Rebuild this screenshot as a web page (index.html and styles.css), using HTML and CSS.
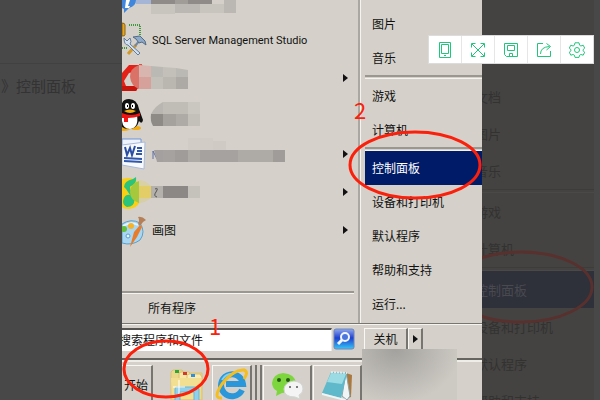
FILE: index.html
```html
<!doctype html>
<html lang="zh-CN">
<head>
    <meta charset="UTF-8">
    <meta name="viewport" content="width=device-width, initial-scale=1.0">
    <title>控制面板</title>
    <link rel="stylesheet" href="styles.css">
</head>
<body>

<div class="page">

    <div class="back-left">
        <div class="back-head"></div>
        <p>》控制面板</p>
    </div>

    <div class="photo">
        <div class="menu">
            <div class="programs">
                <ul>
                    <li class="first">
                        <svg class="pic" width="170" height="21" viewBox="0 0 170 21">
                            <path d="M0 0h14q0 6-7 8l-5 5v-4l-2-1z" fill="#3f86dc"/>
                            <path d="M4 0h4l-2 6h2l-1 2H3z" fill="#fff"/>
                            <path fill="#a5b5d5" d="M14 0h15v4H14z"/>
                            <path fill="#8e8b88" d="M29 0h24v4H29zM66 0h24v4H66z"/>
                            <path fill="#a09d99" d="M53 0h13v4H53z"/>
                            <path fill="#c8c5bf" d="M29 4h24v10H29zM78 4h24v9H78z"/>
                            <path fill="#bbb8b3" d="M53 4h25v9H53zM102 0h12v13h-12z"/>
                        </svg>
                    </li>
                    <li>
                        <svg class="pic" width="30" height="38" viewBox="0 0 30 38">
                            <path d="M0 2q3 0 3 2v10q0 1-3 1z" fill="#e6a51c" stroke="#8a6414"/>
                            <path d="M7 4h11v11M0 27h5" fill="none" stroke="#3c9a3c" stroke-width="2" stroke-dasharray="1 1"/>
                            <path d="M6 33l8-9" stroke="#d39a2a" stroke-width="3"/>
                            <path d="M13 25l5-6" stroke="#7187a3" stroke-width="2"/>
                            <path d="M11 16l7-1 5 5 1 4-4-3-3 1-3-4z" fill="#8fa9c8" stroke="#536b87"/>
                            <path d="M2 17l3 3 3-3q2 4 0 6l10 9-2 2L6 24q-4 0-4-7z" fill="#d3e0ee" stroke="#627d9c"/>
                        </svg>
                        <span class="latin">SQL Server Management Studio</span>
                    </li>
                    <li class="more">
                        <svg class="pic" width="170" height="38" viewBox="0 0 170 38">
                            <path d="M0 14L7 6h14l-9 7-5 1-5 8 2 5h13l-3 5H0z" fill="#e32119"/>
                            <path d="M0 27h17l-3 5H0z" fill="#c5150c"/>
                            <path d="M17 5h3v4h-3z" fill="#dc5047"/>
                            <path d="M17 6q-9 3-9 12 1 9 9 12z" fill="#db7268"/>
                            <path d="M17 6l12 1v11H17z" fill="#d8b5ae"/>
                            <path d="M17 18h12v12H17z" fill="#d5a19a"/>
                            <path d="M29 7l12 1v10H29zM54 9l12 2v7H54z" fill="#bbb9b3"/>
                            <path d="M41 8l13 1v9H41zM29 18h12v12H29z" fill="#c3c0ba"/>
                            <path d="M41 18h13v12H41z" fill="#bab7b1"/>
                            <path d="M54 18h12v12H54z" fill="#adaaa5"/>
                        </svg>
                    </li>
                    <li>
                        <svg class="pic" width="170" height="38" viewBox="0 0 170 38">
                            <ellipse cx="2" cy="31" rx="7" ry="3" fill="#f2ac12"/>
                            <ellipse cx="14" cy="31" rx="5" ry="2" fill="#f2ac12"/>
                            <path d="M-1 12q0-10 8-10t10 10l4 11q-1 5-4 1-2 8-10 8t-9-6z" fill="#111"/>
                            <path d="M0 18h15q2 13-7 14-7 0-8-8z" fill="#fff"/>
                            <ellipse cx="5" cy="9" rx="2" ry="3" fill="#fff"/>
                            <ellipse cx="11" cy="9" rx="2" ry="3" fill="#fff"/>
                            <path d="M5 8h1v2H5zM10 8h1v2h-1z"/>
                            <path d="M2 14q6-3 12 0-6 4-12 0z" fill="#f2ac12"/>
                            <path d="M0 16q9 4 18 0v3q-6 2-12 2v4H2v-4H0z" fill="#f01515"/>
                            <path d="M41 5v12H29q4-8 12-12z" fill="#b9b6b1"/>
                            <path d="M41 5h25v12H41z" fill="#c0bdb7"/>
                            <path d="M66 5h12v12H66z" fill="#cac6c0"/>
                            <path d="M29 17h12v12H31q-3-5-2-12z" fill="#8e8b87"/>
                            <path d="M41 17h13v12H41z" fill="#a5a29d"/>
                            <path d="M54 17h12v12H54z" fill="#aeaba6"/>
                            <path d="M66 17h12v12H66z" fill="#c3c0ba"/>
                        </svg>
                    </li>
                    <li class="more">
                        <svg class="pic" width="170" height="38" viewBox="0 0 170 38">
                            <path d="M0 4h19v10H0z" fill="#eef3fc" stroke="#6d93d6"/>
                            <path d="M0 10l23-3-1 27-22-4z" fill="#f7f9fd" stroke="#a9bbdb"/>
                            <path d="M3 12l2 8 3-7 2 7 3-9" fill="none" stroke="#2a4ea3" stroke-width="2"/>
                            <path d="M15 13h5M15 16h5M14 19h6M2 23l18 1M2 26l18 1" stroke="#3157ab" stroke-width="2"/>
                            <path d="M31 24v-8l4 8" fill="none" stroke="#5f6fa5"/>
                            <path d="M66 3h25v12H66z" fill="#d1cdc6"/>
                            <path d="M91 6h13v9H91z" fill="#cfcbc4"/>
                            <path d="M32 15h9v12h-6z" fill="#a3a09f"/>
                            <path d="M41 15h12v12H41zM78 15h38v12H78z" fill="#a5a2a0"/>
                            <path d="M53 15h13v12H53zM151 15h12v12h-12z" fill="#9f9c99"/>
                            <path d="M66 15h12v12H66zM116 15h35v12h-35z" fill="#aeaba6"/>
                        </svg>
                    </li>
                    <li class="more">
                        <svg class="pic" width="170" height="38" viewBox="0 0 170 38">
                            <path d="M0 6q17-5 20 15-2 15-14 15-4 0-6-2z" fill="#fbd014"/>
                            <path d="M2 14q0-6 9-8l3-2q1 7-5 9-3 1 3 11 2 10-7 10-6-3-3-9 2-4 6-3l-4-6z" fill="#2cc47a"/>
                            <path d="M17 8q-9 3-9 11t9 11z" fill="#a5c83c"/>
                            <path d="M17 7q6 0 12 6H17z" fill="#d9d0a3"/>
                            <path d="M17 13h12v12H17z" fill="#e3cd66"/>
                            <path d="M17 25h12q-6 5-12 5z" fill="#d7cea5"/>
                            <path d="M29 13h12v12H29z" fill="#b4b0ab"/>
                            <path d="M33 16q4-2 1 3-3 4 1 5" fill="none" stroke="#555"/>
                            <path d="M41 13h25v12H41z" fill="#8b8885"/>
                            <path d="M66 13h12v12H66z" fill="#c5c2bc"/>
                        </svg>
                    </li>
                    <li class="more">
                        <svg class="pic" width="30" height="38" viewBox="0 0 30 38">
                            <path d="M0 13q9-6 18-1 6 9 0 17-8 6-18 3z" fill="#a9d7f1" stroke="#5b9fc9"/>
                            <path d="M1 15q8-5 15-1" fill="none" stroke="#e3f4fd" stroke-width="2"/>
                            <circle cx="2" cy="18" r="3" fill="#65bf3b"/>
                            <circle cx="9" cy="15" r="3" fill="#f5b32a"/>
                            <circle cx="6" cy="25" r="2" fill="#eaf6fd" stroke="#5b9fc9"/>
                            <path d="M8 36l4-15 6-7 2 2-5 10z" fill="#e77d2b"/>
                            <path d="M16 6q4-1 8 3l-3 2-3 4-2-2q2-4 0-7z" fill="#b57f57"/>
                        </svg>
                        <span>画图</span>
                    </li>
                </ul>
                <div class="all">所有程序</div>
            </div>
            <ul class="places">
                <li>图片</li>
                <li>音乐</li>
                <li class="line"></li>
                <li>游戏</li>
                <li>计算机</li>
                <li class="line"></li>
                <li class="on">控制面板</li>
                <li>设备和打印机</li>
                <li>默认程序</li>
                <li>帮助和支持</li>
                <li>运行...</li>
            </ul>
        </div>

        <div class="search">
            <input type="text" value="搜索程序和文件" aria-label="搜索程序和文件">
            <button class="find" aria-label="搜索">
                <svg width="22" height="22" viewBox="0 0 22 22">
                    <defs>
                        <linearGradient id="blue" x2="0" y2="1">
                            <stop offset="0" stop-color="#8fa8ee"/>
                            <stop offset=".45" stop-color="#1e3fd0"/>
                            <stop offset="1" stop-color="#35c8f5"/>
                        </linearGradient>
                    </defs>
                    <rect x="1" y="1" width="20" height="20" rx="2" fill="url(#blue)" stroke="#6c86b8"/>
                    <circle cx="12" cy="9" r="4" fill="#4b77dd" stroke="#f3f6ff" stroke-width="2"/>
                    <path d="M9 12l-4 4" stroke="#f3f6ff" stroke-width="3"/>
                </svg>
            </button>
            <button class="btn off">关机</button>
            <button class="btn arrow" aria-label="更多"></button>
        </div>

        <div class="taskbar">
            <button class="btn start">开始</button>
            <button class="task plain" aria-label="资源管理器">
                <svg width="36" height="36" viewBox="0 0 36 36">
                    <path d="M2 7l2-2h9l2 3h18v27H2z" fill="#ecd88a" stroke="#d9c273"/>
                    <path d="M6 5h4v3H6z" fill="#2da836"/>
                    <path d="M10 8l2-1h8l2 3v8H10z" fill="#f6e7a6" stroke="#d9c273"/>
                    <path d="M14 7h4v3h-4z" fill="#d23b2c"/>
                    <path d="M18 10l2-1h11l2 3v8H18z" fill="#f8ecb4" stroke="#d9c273"/>
                    <path d="M22 9h4v3h-4z" fill="#2d8fdd"/>
                    <path d="M2 13h30l-1 21H3z" fill="#f3df92"/>
                    <path d="M6 36V24q0-2 2-2h19q3 0 3 2v12h-5v-9H11v9z" fill="#8fd0ec" stroke="#6bb5d6"/>
                    <path d="M10 15v14M4 22h12" stroke="#fff"/>
                </svg>
            </button>
            <button class="btn task" aria-label="浏览器">
                <svg width="36" height="36" viewBox="0 0 36 36">
                    <path d="M28 23a11 11 0 1 1 1-6H12" fill="none" stroke="#2a97da" stroke-width="6"/>
                    <path d="M8 13q4-7 12-6" fill="none" stroke="#7fd0f5" stroke-width="2"/>
                    <path d="M8 31Q-2 32 8 17 20 2 30 3q5 2 0 9" fill="none" stroke="#f5bd1d" stroke-width="3"/>
                </svg>
            </button>
            <div class="grip"></div>
            <button class="btn task wide" aria-label="微信">
                <svg width="36" height="34" viewBox="0 0 36 34">
                    <path d="M14 5q12 1 13 10-1 10-14 10l-6 3 1-5q-5-3-5-8Q4 6 14 5z" fill="#7ed63f"/>
                    <circle cx="10" cy="12" r="2" fill="#255b16"/>
                    <circle cx="19" cy="12" r="2" fill="#255b16"/>
                    <path d="M25 13q9 1 9 8 0 4-4 6l1 4-5-2q-11 0-11-8 1-7 10-8z" fill="#f3f4f3" stroke="#d3d6d3"/>
                    <circle cx="21" cy="19" r="1" fill="#555"/>
                    <circle cx="28" cy="19" r="1" fill="#555"/>
                </svg>
            </button>
            <button class="btn task wide" aria-label="记事本">
                <svg width="36" height="34" viewBox="0 0 36 34">
                    <path d="M27 5l6 2-1 22-6 2z" fill="#a9793f"/>
                    <path d="M27 4l4 24-3 4-5-4z" fill="#f2f5f6" stroke="#8aa3a9"/>
                    <path d="M12 4l16 1-6 25-19-5z" fill="#5fb9ca"/>
                    <path d="M12 5l15 1-4 10-15-2z" fill="#9bdbe4"/>
                    <path d="M3 25l19 5 5 1-1 2L3 27z" fill="#eef5f6"/>
                    <path d="M12 4l16 1" stroke="#e5e8e8" stroke-width="2" stroke-dasharray="2 1"/>
                </svg>
            </button>
        </div>

        <div class="smudge"></div>

        <svg class="marks" width="360" height="400" viewBox="0 0 360 400">
            <g fill="none" stroke="#fb200c" stroke-width="3">
                <ellipse cx="44" cy="369" rx="42" ry="28"/>
                <ellipse cx="293" cy="165" rx="65" ry="33"/>
            </g>
            <text x="87" y="335">1</text>
            <text x="232" y="119">2</text>
        </svg>
    </div>

    <div class="back-right">
        <ul class="ghost">
            <li>文档</li>
            <li>图片</li>
            <li>音乐</li>
            <li class="line"></li>
            <li>游戏</li>
            <li>计算机</li>
            <li class="line"></li>
            <li class="on">控制面板</li>
            <li>设备和打印机</li>
            <li>默认程序</li>
            <li>帮助和支持</li>
        </ul>
        <svg class="marks" width="118" height="400" viewBox="0 0 118 400">
            <ellipse cx="39" cy="287" rx="71" ry="35" fill="none" stroke="#58312e" stroke-width="3"/>
        </svg>
    </div>

    <div class="tools">
        <button aria-label="手机">
            <svg width="16" height="16" viewBox="0 0 16 16">
                <path d="M2.500 .5h11v15h-11zM4.500 2.500h7v9h-7zM7 13.500h2"/>
            </svg>
        </button>
        <button aria-label="全屏">
            <svg width="16" height="16" viewBox="0 0 16 16">
                <path d="M2 2l12 12M14 2L2 14M1.500 5.500v-4h4M10.500 1.500h4v4M14.500 10.500v4h-4M5.500 14.500h-4v-4"/>
            </svg>
        </button>
        <button aria-label="保存">
            <svg width="16" height="16" viewBox="0 0 16 16">
                <path d="M1.500 1.500h13v13h-11l-2-2zM4.500 3.500h7v5h-7zM6.500 14.500v-3h3v3"/>
            </svg>
        </button>
        <button aria-label="分享">
            <svg width="16" height="16" viewBox="0 0 16 16">
                <path d="M7 1.500H1.500v13h13V9M4.500 12q0-7 9-7.500M10.500 1.500l4 3-4 3.500"/>
            </svg>
        </button>
        <button aria-label="设置">
            <svg width="16" height="16" viewBox="0 0 16 16">
                <path d="M6 .8h4l.6 2.400 1.300.8 2.300-.8 1.500 3-1.700 1.500v1l1.700 1.500-1.500 3-2.300-.7-1.300.7-.6 2.200H6l-.6-2.200-1.300-.7-2.300.7-1.500-3L2 8.700v-1L.3 6.200l1.500-3 2.300.8 1.300-.8z"/>
                <circle cx="8" cy="8" r="2.500"/>
            </svg>
        </button>
    </div>

</div>

</body>
</html>
```

FILE: styles.css
```css
*{
    box-sizing: border-box;
}
body{
    margin: 0;
    background: #484848;
    font-family: "Noto Sans", "Noto Sans CJK SC", sans-serif;
    font-size: 12px;
    color: #111;
}
ul,p{
    margin: 0;
    padding: 0;
    list-style: none;
}
button,input{
    margin: 0;
    padding: 0;
    border: 0;
    border-radius: 0;
    font: inherit;
    color: inherit;
}
svg{
    display: block;
}
.page{
    position: relative;
    display: grid;
    grid-template-columns: 1fr 360px 118px;
    height: 100vh;
    overflow: hidden;
}

/* dimmed page behind */
.back-head{
    height: 64px;
    border-bottom: 1px solid #414141;
}
.back-left p{
    padding: 11px 0 0 1px;
    font-family: "Noto Sans CJK SC", sans-serif;
    font-size: 15px;
    line-height: 22px;
    color: #333;
}
.back-right{
    position: relative;
    overflow: hidden;
}
.ghost{
    height: 100%;
    margin-right: 6px;
    padding-top: 78px;
    background: #444341;
    font-family: "Noto Sans CJK SC", sans-serif;
    font-size: 13px;
    color: #333231;
}
.ghost li{
    height: 37px;
    margin-left: -7px;
    line-height: 37px;
    white-space: nowrap;
}
.ghost .line{
    height: 4px;
    border-top: 1px solid #3d3c3b;
    border-bottom: 1px solid #4a4948;
}
.ghost .on{
    background: #2e303a;
    color: #484a50;
}

/* start menu */
.photo{
    position: relative;
    background: #d5d1ca;
    overflow: hidden;
}
.menu{
    display: flex;
    height: 324px;
    border-bottom: 1px solid #77756f;
}
.programs{
    display: flex;
    flex-direction: column;
    width: 238px;
    border-right: 2px solid #aaa7a2;
}
.programs ul{
    flex: 1;
}
.programs li{
    position: relative;
    display: flex;
    align-items: center;
    height: 38px;
}
.programs .first{
    height: 21px;
}
.programs span{
    white-space: nowrap;
}
.programs .latin{
    font-family: Roboto, sans-serif;
    font-size: 11px;
}
.more{
    justify-content: space-between;
    padding-right: 10px;
}
.more span{
    flex: 1;
}
.more:after{
    content: "";
    border: 4px solid transparent;
    border-left: 5px solid #111;
    border-right: 0;
}
.all{
    height: 32px;
    margin-right: 4px;
    padding-left: 26px;
    border-top: 2px solid #99978f;
    box-shadow: inset 0 1px #f5f3ef;
    line-height: 32px;
}
.places{
    flex: 1;
    padding: 7px 0 0 4px;
    border-left: 1px solid #f5f3ef;
}
.places li{
    height: 34px;
    padding-left: 7px;
    line-height: 36px;
}
.places .line{
    height: 4px;
    border-top: 2px solid #99978f;
    border-bottom: 1px solid #f5f3ef;
}
.places .on{
    background: #001c68;
    color: #fff;
}
.search{
    display: flex;
    height: 36px;
    padding-top: 3px;
    border-top: 1px solid #f5f3ef;
    border-bottom: 2px solid #66645f;
}
.search input{
    width: 210px;
    height: 23px;
    padding-bottom: 2px;
    border-top: 2px solid #55534f;
    border-right: 1px solid #eeebe6;
    background: #fff;
    text-indent: -3px;
}
.find{
    width: 22px;
    height: 22px;
    margin: 0 9px 0 1px;
    background: none;
}
.btn{
    height: 22px;
    background: #d5d1ca;
    border: 1px solid #f8f7f4;
    border-right: 2px solid #77756f;
    border-bottom-color: #77756f;
}
.off{
    width: 44px;
}
.arrow{
    display: flex;
    align-items: center;
    justify-content: center;
    width: 15px;
}
.arrow:after{
    content: "";
    border: 4px solid transparent;
    border-left: 5px solid #111;
    border-right: 0;
}
.taskbar{
    display: flex;
    height: 40px;
    padding-top: 3px;
    border-top: 2px solid #efede8;
}
.taskbar .btn{
    height: 40px;
}
.start{
    width: 31px;
    padding-left: 2px;
    border-left: 0;
    text-align: left;
}
.task{
    display: flex;
    align-items: center;
    justify-content: center;
    width: 40px;
}
.plain{
    width: 59px;
    padding-left: 8px;
    background: none;
}
.grip{
    width: 10px;
    border-right: 2px solid #77756f;
    background: linear-gradient(90deg, #d5d1ca 3px, #77756f 3px, #77756f 5px, #d5d1ca 5px);
}
.taskbar .wide{
    width: 49px;
    margin-left: 1px;
}
.smudge{
    position: absolute;
    right: 25px;
    top: 349px;
    width: 95px;
    height: 51px;
    background: radial-gradient(ellipse at 35% 0, #a3a19d, #cdcac4 75%);
}
.marks{
    position: absolute;
    left: 0;
    top: 0;
}
.marks text{
    font-family: "Noto Sans CJK SC", sans-serif;
    font-size: 22px;
    fill: #fb200c;
}

/* floating toolbar */
.tools{
    position: absolute;
    right: 6px;
    top: 35px;
    display: flex;
    border: 1px solid #dcdcdc;
}
.tools button{
    display: flex;
    align-items: center;
    justify-content: center;
    width: 33px;
    height: 27px;
    border-left: 1px solid #e6e6e6;
    background: #fff;
}
.tools button:first-child{
    width: 32px;
    border-left: 0;
}
.tools svg{
    fill: none;
    stroke: #22c57c;
}
```
